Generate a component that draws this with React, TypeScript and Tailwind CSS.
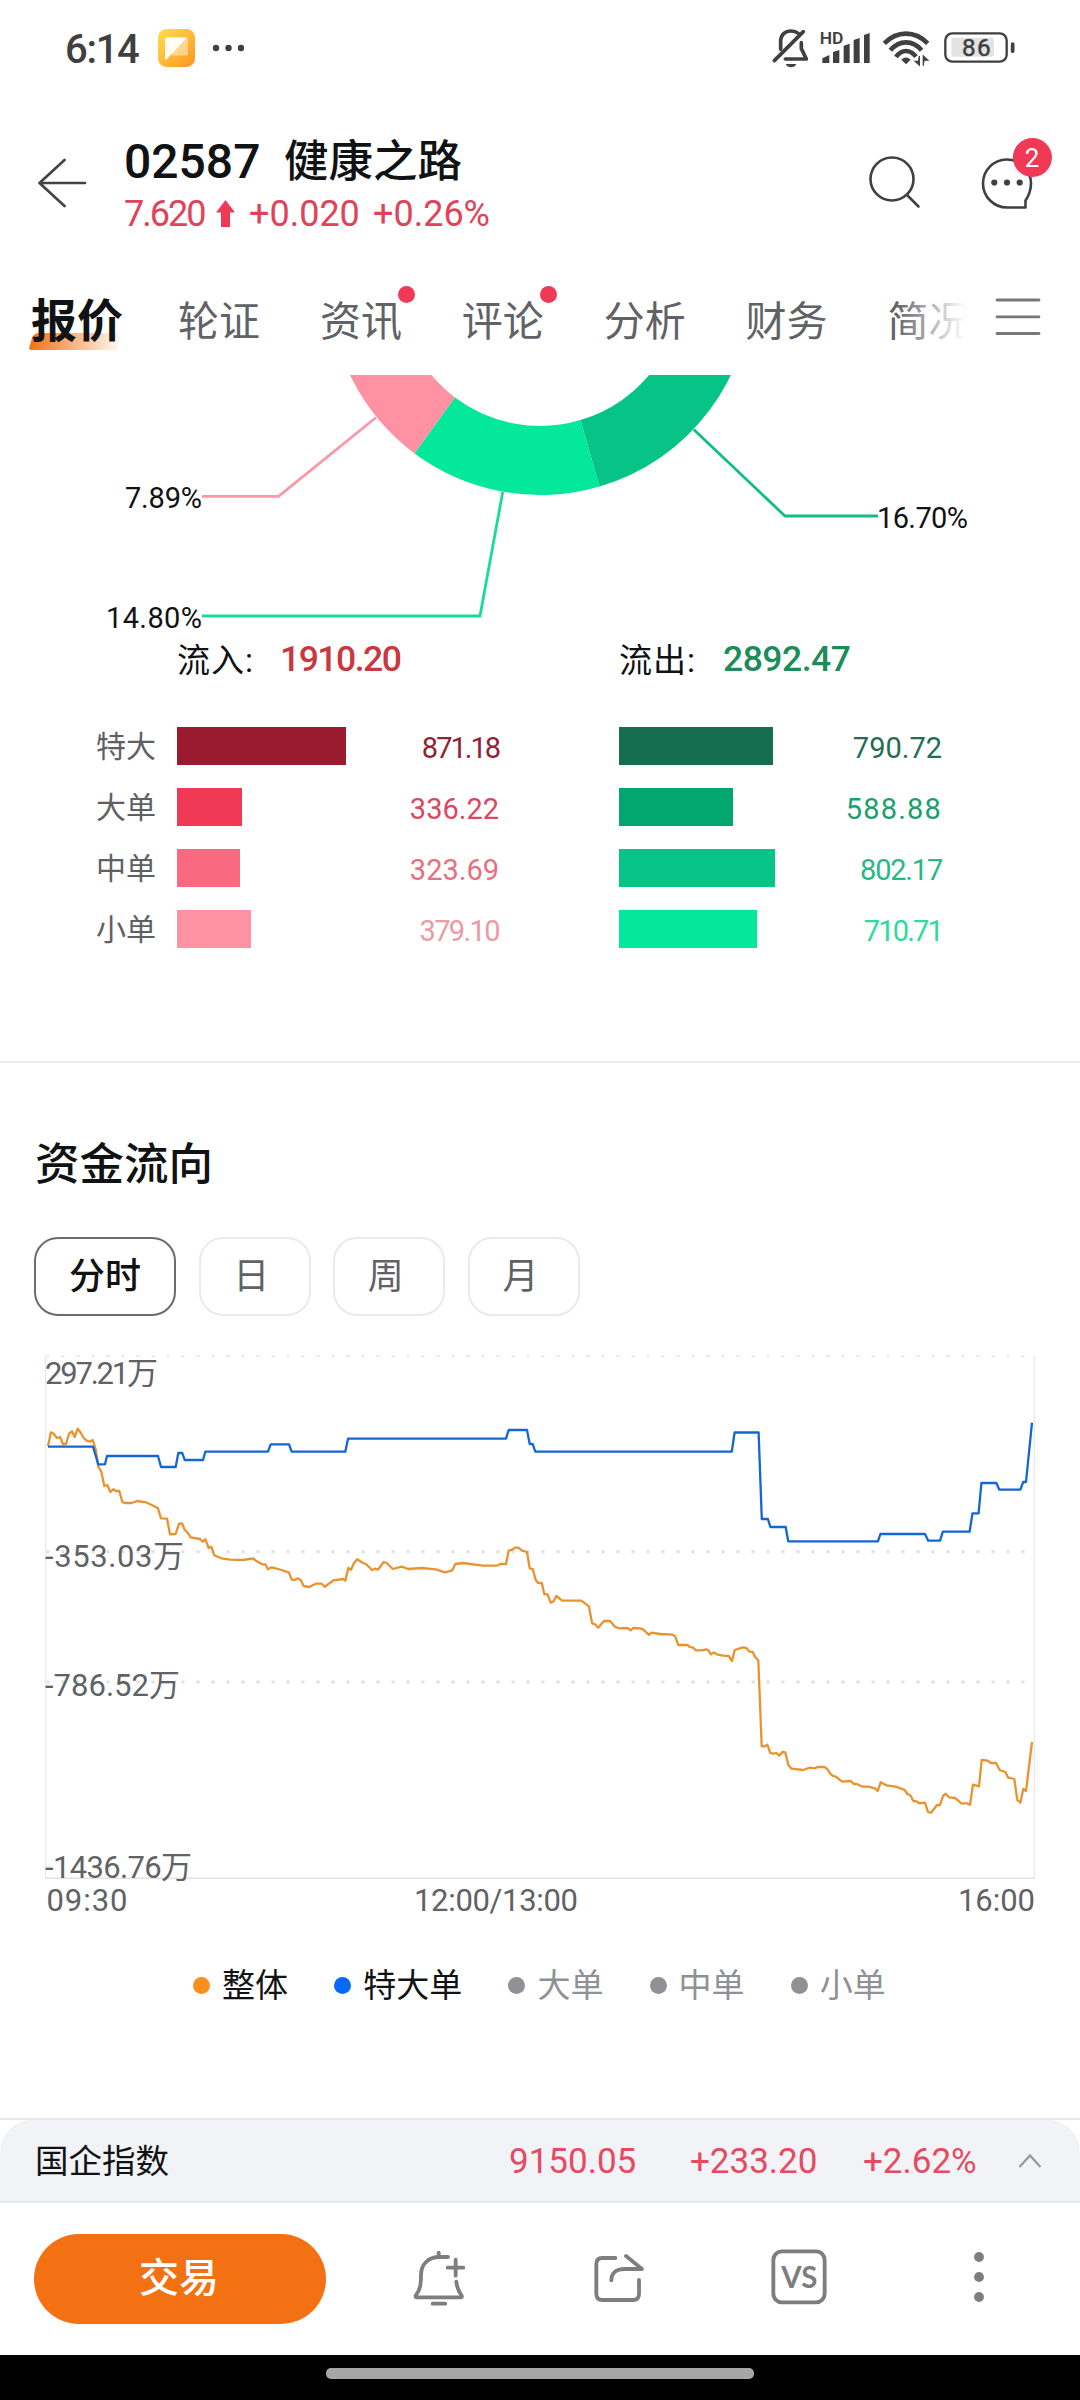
import React from 'react';
import clsx from 'clsx';

const tabs = [
  { name: '轮证' },
  { name: '资讯', dot: true },
  { name: '评论', dot: true },
  { name: '分析' },
  { name: '财务' },
  { name: '简况' },
];

const inflow = [
  { label: '特大', value: '871.18', width: 169, bar: 'bg-[#9a1b2e]', text: 'text-[#8f2333] tracking-[-2px]' },
  { label: '大单', value: '336.22', width: 65, bar: 'bg-[#f03a55]', text: 'text-[#d9485f]' },
  { label: '中单', value: '323.69', width: 63, bar: 'bg-[#f96980]', text: 'text-[#e5707f]' },
  { label: '小单', value: '379.10', width: 74, bar: 'bg-[#ff92a2]', text: 'text-[#ec9aa6] tracking-[-1.6px]' },
];

const outflow = [
  { value: '790.72', width: 153.5, bar: 'bg-[#156e4f]', text: 'text-[#236e52]' },
  { value: '588.88', width: 114, bar: 'bg-[#01a76e]', text: 'text-[#1c9e6e] tracking-[1.2px]' },
  { value: '802.17', width: 155.5, bar: 'bg-[#05c485]', text: 'text-[#27b887] tracking-[-1.2px]' },
  { value: '710.71', width: 138, bar: 'bg-[#03e89b]', text: 'text-[#2cdb9d] tracking-[-1.8px]' },
];

const periods = ['日', '周', '月'];

const legend = [
  { name: '整体', dot: 'bg-[#fb8f1c]', text: 'text-[#111213]' },
  { name: '特大单', dot: 'bg-[#0768fd]', text: 'text-[#111213]' },
  { name: '大单', dot: 'bg-[#8e9195]', text: 'text-[#8e9195]' },
  { name: '中单', dot: 'bg-[#8e9195]', text: 'text-[#8e9195]' },
  { name: '小单', dot: 'bg-[#8e9195]', text: 'text-[#8e9195]' },
];

const superLargeLine =
  '48,106.7 93,106.7 98.3,124.3 105,124.3 107,116 158,116 161,127 175.7,127 178.3,113 182.3,113 184.7,120 203,120 205.3,111.7 268,111.7 270.7,104.3 289,104.3 291.7,111.7 345.3,111.7 348,98.7 506,98.7 508.7,90 527,90 529.7,104 532.7,104 535.3,111.7 731.8,111.7 734.6,92.5 758.6,92.5 761.8,179 767.9,179 770.4,187 785.7,187 788.2,201.3 877.9,201.3 880.4,194 925,194 928.2,200.7 940,200.7 942.9,191.7 969.6,191.7 972.5,173.3 978.6,173.3 981.4,143 996.4,143 999.3,149.7 1020.4,149.7 1023.2,142 1026,142 1032,82.7';

const totalLine =
  '48,106 51,92.3 53.7,93.7 57,98 60,97 63,104 66,104 69,93.7 72,91.3 74.7,97 77.7,88.7 80.7,92.7 83.7,98 86.7,100.7 90,101.7 92.7,100 95.7,109.3 98.3,126.7 101.3,131.7 104.3,146 107.3,145 110.3,152 113.3,149.3 116,151 119.3,151 122.3,162 125,163 131.7,163 137,161 146,162.3 153.3,165.7 158,168.3 161,178.3 167,178.7 170,194.3 175.7,194 179,183.7 182,183.3 184.7,189.7 187.7,192.7 190.7,197.3 200,199 202.7,201.7 205.3,199.3 208.7,208 211.3,206.7 214.3,215.3 221.3,218.3 230,219.7 243.3,220 253,218.3 256.7,221.3 262.3,224.3 265.3,224.3 268,229.3 271.7,227.3 281.7,230 289,232.7 291.7,239.7 294.7,240 297.7,238.3 300.7,240 303.7,246 309.3,247 315.7,243.7 321.7,243.7 324.7,246.7 333.7,240.3 343,239 345.3,240.7 348.3,228 351,229.7 354,223 357.3,219.3 363,223 366,224 372,230 375,228.7 378,229.7 383.7,222 386.7,223 392.7,229 401.7,226.7 408.3,229 421.7,228 435.7,229.3 445,232.3 452.3,230.3 455.3,224 462.7,223 482.7,225.7 496.7,225.7 500.3,224 506,224 508.7,210.7 512.3,209.7 515,207.7 518.3,207.7 522,210.7 527,212 529.7,228.3 532.7,229 535.7,240 538.2,243 541.8,243 544.3,254 547.5,254.3 550.7,262.7 553.6,261.3 556.4,256 562.1,260.7 581.4,260.7 588.9,266.3 592.1,283.3 595,284.3 598.2,287.7 603.9,281 610,281 615,286.7 618.9,288.3 627.5,288 630.7,290.3 633.2,288 640,288.3 643,289.3 648.7,294.7 651.7,292.7 660,294 672.7,294.7 675.3,296.7 678.3,305 687.3,305 690,307 693,307.7 696,310.3 702,310.3 706,309.3 708,310 711,314.3 713.7,312.3 716.7,314.3 723,315.7 728.7,316 732,321 734.7,310 742.7,307.3 746.3,308 749.7,311.7 752.7,312 755.3,317.3 758.3,320.3 761.7,406.3 764.7,406.3 767.3,404.7 770.3,413 773.3,413.7 776.3,413 779.3,415.7 782.3,412 785.3,412.3 788.3,425 791.7,428.7 803.3,430 809.3,427.7 815,428.3 817.7,427 824.3,427 827,428.7 830.3,433.7 833,436 836,436.7 842,441.7 850.7,441 853.7,444 856.7,444 862.7,446.7 868.7,446.7 874.7,448.3 877.7,451 880.7,442.3 886.3,445.3 895.7,446.7 904.7,450 907.3,454 910.3,455.3 913.3,461 916.3,461.3 919.3,463.3 925,462.7 928,472 931,472.7 937,465 940,465 943,456 945.7,453.7 949,457.3 955,458 958,460.3 961,463.3 967,463.3 970,464.7 973,444.7 979,446.3 981.7,420 987.7,420.7 990.7,423 996,423 999.7,430 1005.3,432 1008.3,437.7 1014.3,439 1017.3,460 1020.3,462.7 1023.3,449 1026,451 1032,402';

const StatusBar = () => (
  <div className="flex h-[100px] shrink-0 pt-5 text-[#404040]">
    <div className="flex h-[60px] items-center pl-[65px]">
      <span className="w-[93px] text-[40px] leading-none font-medium tracking-[-1.3px]">6:14</span>
      <svg className="-mt-[5px] h-[38px] w-[37px]" viewBox="0 0 37 38">
        <defs>
          <linearGradient id="app" x1="0" y1="0" x2="1" y2="1">
            <stop offset="0" stopColor="#ffdf4a" />
            <stop offset="1" stopColor="#ff9524" />
          </linearGradient>
        </defs>
        <rect width="37" height="38" rx="8.5" fill="url(#app)" />
        <path d="M9 8.500h19a2 2 0 0 1 2 2v14a2 2 0 0 1-2 2H14z" fill="#fff" opacity=".45" />
        <path d="M9 8.500h20L8.500 30.500a1 1 0 0 1-1.500-1V10.500a2 2 0 0 1 2-2z" fill="#fff" opacity=".92" />
      </svg>
      <svg className="-mt-[5px] ml-[17px] h-2 w-9" viewBox="0 0 36 8" fill="currentColor">
        <circle cx="4" cy="4" r="3.200" />
        <circle cx="16.500" cy="4" r="3.200" />
        <circle cx="29" cy="4" r="3.200" />
      </svg>
    </div>
    <svg className="mr-[50px] ml-auto h-[60px] w-[270px]" viewBox="0 0 810 180" fill="none" stroke="currentColor" strokeWidth="11">
      <g strokeLinecap="round" strokeLinejoin="round">
        <path d="M43 122L130 35" />
        <path d="M62 88V64C62 44 76 33 93 33Q106 33 115 40" />
        <path d="M124 68V86L139 117H76" />
      </g>
      <path d="M77 132H109Q104 142 93 142T77 132Z" fill="currentColor" stroke="none" />
      <text x="179" y="72" fontSize="50" fontWeight="600" textLength="71" lengthAdjust="spacingAndGlyphs" fill="currentColor" stroke="none">HD</text>
      <path d="M187 129V115L208 105V129ZM219 129V96L238 90V129ZM251 129V77L269 71V129ZM281 129V60L299 54V129ZM312 129V45L329 39V129Z" fill="currentColor" stroke="none" />
      <g strokeWidth="14">
        <path d="M373 70Q402 41 438 41T503 70" />
        <path d="M391 91Q411 67 438 67T485 91" />
        <path d="M408 111Q421 93 438 93T468 110" />
      </g>
      <path d="M424 119Q438 106 452 119L438 133Z" fill="currentColor" stroke="none" />
      <path d="M478 108V135L466 124H473M490 137V108L503 120H495" fill="currentColor" strokeWidth="4" />
      <rect x="574" y="53" width="128" height="57" rx="8" fill="#e3e3e3" stroke="none" />
      <rect x="556" y="40" width="184" height="85" rx="21" strokeWidth="7" />
      <path d="M758 72V94" strokeWidth="11" strokeLinecap="round" />
      <text x="606" y="109" fontSize="73" textLength="86" fill="currentColor" strokeWidth="1.500">86</text>
    </svg>
  </div>
);

const Header = () => (
  <header className="flex h-[160px] shrink-0 pl-[38px]">
    <svg className="mt-[58px] h-[50px] w-[50px]" viewBox="0 0 50 50" fill="none" stroke="#444" strokeWidth="2.700" strokeLinecap="round" strokeLinejoin="round">
      <path d="M26.500 2L1.500 25L26.500 48M1.500 25H47" />
    </svg>
    <div className="ml-9 flex flex-col pt-[37px]">
      <h1 className="flex h-[50px] items-center leading-none font-medium text-[#111213]">
        <span className="w-[160px] text-[48px]">02587</span>
        <span className="text-[44.500px]">健康之路</span>
      </h1>
      <div className="flex h-[50px] items-center pt-1 text-[36px] leading-none text-[#e0425a]">
        <span className="w-[92px] tracking-[-2px]">7.620</span>
        <svg className="-mt-0.5 h-[27px] w-[19px]" viewBox="0 0 19 27" fill="#f03a55">
          <path d="M9.500 0L19 12.500H14V27H5V12.500H0z" />
        </svg>
        <span className="ml-[14px] w-[124px]">+0.020</span>
        <span>+0.26%</span>
      </div>
    </div>
    <svg className="ml-auto h-[120px] w-[220px]" viewBox="860 100 220 120" fill="none" stroke="#404040" strokeWidth="2.600">
      <circle cx="892" cy="179" r="21.500" />
      <path d="M907 195L918.500 206.500" strokeLinecap="round" />
      <path d="M1025.500 200.500Q1031 192.500 1031 183A24 24 0 1 0 1007 207.500H1025.500Z" strokeLinejoin="round" />
      <g fill="#404040" stroke="none">
        <circle cx="994.300" cy="182.500" r="3.100" />
        <circle cx="1007" cy="182.500" r="3.100" />
        <circle cx="1019.700" cy="182.500" r="3.100" />
      </g>
      <circle cx="1032.400" cy="157.500" r="19.500" fill="#f03a55" stroke="none" />
      <text x="1032" y="167" fontSize="26" textAnchor="middle" fill="#fff" stroke="none">2</text>
    </svg>
  </header>
);

const TabBar = () => (
  <nav className="flex h-[115px] shrink-0 items-start pl-[30px] text-[41px] leading-none text-[#606266]">
    <div className="relative mt-[37px] w-[148px] text-[46px] font-bold text-[#111213]">
      <svg className="absolute top-9 -left-px h-[17px] w-[95px]" viewBox="0 0 95 17">
        <defs>
          <linearGradient id="underline">
            <stop offset="0" stopColor="#f47113" />
            <stop offset="1" stopColor="#f47113" stopOpacity="0" />
          </linearGradient>
        </defs>
        <path d="M10 0H95L88 17H2Q-1 17 1 12L3 5Q5 0 10 0z" fill="url(#underline)" />
      </svg>
      <span className="relative top-px left-px">报价</span>
    </div>
    <div className="relative flex w-[787px] gap-[59.900px] overflow-hidden pt-[18px] pb-5">
      {tabs.map((tab) => (
        <div key={tab.name} className="relative mt-6 shrink-0">
          {tab.name}
          {tab.dot && <span className="absolute -top-4 -right-[13px] size-[17px] rounded-full bg-[#f03a55]" />}
        </div>
      ))}
      <div className="absolute inset-y-0 right-0 w-[70px] bg-gradient-to-r from-white/0 to-white" />
    </div>
    <svg className="mt-[38px] ml-[30px] h-10 w-[46px]" viewBox="0 0 46 40" stroke="#77787a" strokeWidth="2.800" strokeLinecap="round">
      <path d="M2 2H44M2 18.800H44M2 35.500H44" />
    </svg>
  </nav>
);

const Donut = () => (
  <svg className="h-[265px] w-full shrink-0" viewBox="0 375 1080 265" fontSize="29" fill="#111213">
    <g>
      <path d="M329.500 284A211 211 0 0 0 414.500 453.500L455 397.500A141.500 141.500 0 0 1 399 284Z" fill="#ff92a2" />
      <path d="M414.500 453.500A211 211 0 0 0 599.500 486.500L580.500 420A141.500 141.500 0 0 1 455 397.500Z" fill="#03e89b" />
      <path d="M599.500 486.500A211 211 0 0 0 751.500 284H682A141.500 141.500 0 0 1 580.500 420Z" fill="#05c485" />
    </g>
    <g fill="none" strokeWidth="2.800">
      <path d="M376 417.500L278.500 496.300H202" stroke="#f998a6" />
      <path d="M502.700 492L480 616H202" stroke="#1bdb98" />
      <path d="M693.700 429.500L785 516H878" stroke="#14bd84" />
    </g>
    <text x="125" y="508" textLength="77">7.89%</text>
    <text x="106" y="628" textLength="96">14.80%</text>
    <text x="877" y="528" textLength="91">16.70%</text>
  </svg>
);

const FlowSummary = () => (
  <section className="h-[421px] shrink-0 pt-[3px] leading-none">
    <div className="flex h-[34px] items-center pl-[177px] text-[33px] text-[#111213]">
      <span className="w-[103px] tracking-[1px]">流入:</span>
      <span className="w-[339px] text-[35.500px] font-medium tracking-[-1.500px] text-[#c8393f]">1910.20</span>
      <span className="w-[104px] tracking-[1px]">流出:</span>
      <span className="text-[35.500px] font-medium tracking-[-0.500px] text-[#1c8c5b]">2892.47</span>
    </div>
    <div className="mt-[50px] flex pl-[96px]">
      <div className="flex w-[81px] flex-col gap-[23px] text-[30px] text-[#5f6063]">
        {inflow.map((row) => (
          <div key={row.label} className="flex h-[38px] items-center pt-px">{row.label}</div>
        ))}
      </div>
      <div className="flex w-[322px] flex-col gap-[23px]">
        {inflow.map((row) => (
          <div key={row.value} className="flex h-[38px] items-center justify-between">
            <div className={clsx('h-full', row.bar)} style={{ width: row.width }} />
            <span className={clsx('pt-[5px] text-[29px]', row.text)}>{row.value}</span>
          </div>
        ))}
      </div>
      <div className="ml-[120px] flex w-[323px] flex-col gap-[23px]">
        {outflow.map((row) => (
          <div key={row.value} className="flex h-[38px] items-center justify-between">
            <div className={clsx('h-full', row.bar)} style={{ width: row.width }} />
            <span className={clsx('pt-[5px] text-[29px]', row.text)}>{row.value}</span>
          </div>
        ))}
      </div>
    </div>
  </section>
);

const FlowChart = () => (
  <svg className="h-[585px] w-full shrink-0" viewBox="0 0 1080 585" fill="none" fontSize="31">
    <g stroke="#dfe0e2" strokeDasharray="3 12">
      <path d="M46.500 16.300H1034" strokeWidth="1.600" />
      <path d="M46.500 211.700H1034" strokeWidth="3" />
      <path d="M46.500 342H1034" strokeWidth="3" />
    </g>
    <path d="M45.700 16V538M1034.300 16V538" stroke="#ebebed" strokeWidth="1.600" />
    <path d="M45 538.300H1035" stroke="#e2e2e4" strokeWidth="1.600" />
    <g fill="#606266">
      <text x="45" y="44" textLength="113">297.21万</text>
      <text x="45" y="226.500" textLength="139">-353.03万</text>
      <text x="45" y="356" textLength="135">-786.52万</text>
      <text x="45" y="538" textLength="147">-1436.76万</text>
      <text x="46.500" y="571" textLength="81">09:30</text>
      <text x="414" y="571" textLength="164">12:00/13:00</text>
      <text x="958" y="571" textLength="77">16:00</text>
    </g>
    <g strokeWidth="2.300" strokeLinejoin="round">
      <polyline points={totalLine} stroke="#e8932f" />
      <polyline points={superLargeLine} stroke="#1367d3" />
    </g>
  </svg>
);

const FlowTrend = () => (
  <section className="flex h-[1057px] shrink-0 flex-col border-t-2 border-[#eaebec] leading-none">
    <h2 className="mt-[80px] h-[45px] pl-[35px] text-[44.500px] font-medium text-[#111213]">资金流向</h2>
    <div className="mt-[49px] flex gap-[22.700px] pl-[34px] text-[36px]">
      <button className="h-[79px] w-[142px] rounded-[24px] border-2 border-[#6b6c6f] font-medium text-[#111213]">分时</button>
      {periods.map((period) => (
        <button key={period} className="h-[79px] w-[112px] rounded-[24px] border-2 border-[#e9eaec] pr-[7px] text-[#606266]">
          {period}
        </button>
      ))}
    </div>
    <div className="mt-6 flex">
      <FlowChart />
    </div>
    <div className="mt-[43px] flex items-center gap-[46.200px] pl-[193px] text-[33px]">
      {legend.map((item) => (
        <div key={item.name} className={clsx('flex items-center gap-3', item.text)}>
          <span className={clsx('size-[17px] rounded-full', item.dot)} />
          <span className="pt-px">{item.name}</span>
        </div>
      ))}
    </div>
  </section>
);

const IndexBar = () => (
  <div className="h-[85px] shrink-0 border-t-2 border-[#e6e7e9] leading-none">
    <div className="flex h-full items-center rounded-t-[32px] border-b-2 border-[#e8e9eb] bg-[#f2f3f6] pl-[35px]">
      <span className="w-[474px] pt-0.5 text-[33.500px] text-[#111213]">国企指数</span>
      <div className="flex pt-px text-[35px] text-[#e54a60]">
        <span className="w-[181px]">9150.05</span>
        <span className="w-[173px]">+233.20</span>
        <span className="w-[155px]">+2.62%</span>
      </div>
      <svg className="h-4 w-6" viewBox="0 0 24 16" fill="none" stroke="#97999c" strokeWidth="2.200">
        <path d="M1.500 14L12 2.500L22.500 14" />
      </svg>
    </div>
  </div>
);

const ActionBar = () => (
  <footer className="flex h-[152px] shrink-0 items-center pl-[34px]">
    <button className="h-[90px] w-[292px] rounded-full bg-[#f47113] pr-0.5 text-[40px] leading-none font-medium text-white">交易</button>
    <svg className="ml-[84px] h-[90px] w-[60px]" viewBox="60 12 180 270" fill="none" stroke="#7e7e7e" strokeWidth="11.500" strokeLinecap="round" strokeLinejoin="round">
      <path d="M146 68V80M174 81H148C115 81 93 103 93 135C93 165 90 180 77 197Q76 202 80 202H212Q217 202 215 197Q201 178 199 155M173 113H220M197 89V137M128 221H166" />
    </svg>
    <svg className="ml-[120px] h-[90px] w-[60px]" viewBox="600 12 180 270" fill="none" stroke="#7e7e7e" strokeWidth="11.500" strokeLinecap="round" strokeLinejoin="round">
      <path d="M676 84H637Q619 84 619 102V192Q619 210 637 210H729Q747 210 747 192V150M664 151C664 130 678 117 704 117H756L708 78" />
    </svg>
    <svg className="ml-[120px] h-[90px] w-[60px]" viewBox="1140 12 180 270" fill="none" stroke="#7e7e7e" strokeWidth="11.500">
      <rect x="1150" y="64" width="154" height="153" rx="26" />
      <text x="1174" y="175" fontSize="94" fontWeight="700" textLength="108" lengthAdjust="spacingAndGlyphs" fill="#7e7e7e" stroke="none" fontFamily="Lato, sans-serif">VS</text>
    </svg>
    <svg className="-mt-1 ml-[143px] h-[54px] w-[12px]" viewBox="0 0 12 54" fill="#7e7e7e">
      <circle cx="6" cy="7" r="4.900" />
      <circle cx="6" cy="27" r="4.900" />
      <circle cx="6" cy="47" r="4.900" />
    </svg>
  </footer>
);

export default function App() {
  return (
    <main className="flex h-[2400px] w-[1080px] flex-col overflow-hidden bg-white font-['Roboto','Noto_Sans_CJK_SC',sans-serif]">
      <StatusBar />
      <Header />
      <TabBar />
      <Donut />
      <FlowSummary />
      <FlowTrend />
      <IndexBar />
      <ActionBar />
      <div className="flex h-[45px] shrink-0 justify-center bg-black pt-[13px]">
        <div className="h-[11px] w-[428px] rounded-[5px] bg-[#a6a6a6]" />
      </div>
    </main>
  );
}
